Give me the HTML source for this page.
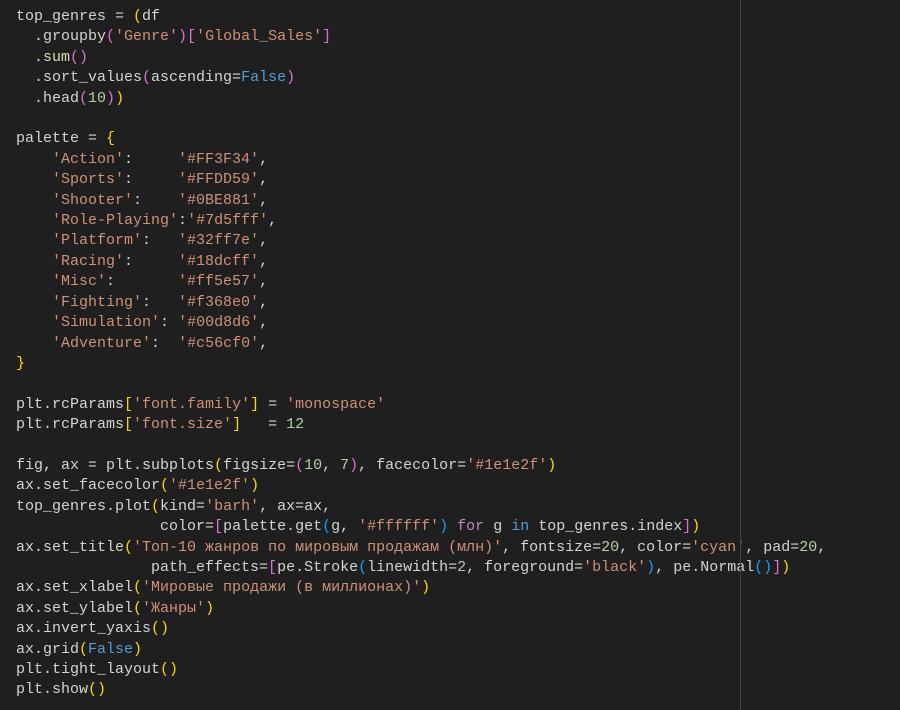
<!DOCTYPE html>
<html><head><meta charset="utf-8"><style>
html,body{margin:0;padding:0;background:#1f1f1f;width:900px;height:710px;overflow:hidden}
pre{margin:0;padding:7px 0 0 16px;font-family:"Liberation Mono","DejaVu Sans Mono",monospace;font-size:15px;line-height:20.4px;color:#d4d4d4;}
.vl{position:absolute;left:740px;top:0;width:1px;height:710px;background:#404040}
.s{color:#ce9178}.n{color:#b5cea8}.k{color:#569cd6}.g{color:#ffd700}.p{color:#da70d6}.b{color:#179fff}.f{color:#dcdcaa}.c{color:#c586c0}
</style></head><body><div class="vl"></div><pre>top_genres = <span class="g">(</span>df
  .groupby<span class="p">(</span><span class="s">'Genre'</span><span class="p">)[</span><span class="s">'Global_Sales'</span><span class="p">]</span>
  .<span class="f">sum</span><span class="p">()</span>
  .sort_values<span class="p">(</span>ascending=<span class="k">False</span><span class="p">)</span>
  .head<span class="p">(</span><span class="n">10</span><span class="p">)</span><span class="g">)</span>

palette = <span class="g">{</span>
    <span class="s">'Action'</span>:     <span class="s">'#FF3F34'</span>,
    <span class="s">'Sports'</span>:     <span class="s">'#FFDD59'</span>,
    <span class="s">'Shooter'</span>:    <span class="s">'#0BE881'</span>,
    <span class="s">'Role-Playing'</span>:<span class="s">'#7d5fff'</span>,
    <span class="s">'Platform'</span>:   <span class="s">'#32ff7e'</span>,
    <span class="s">'Racing'</span>:     <span class="s">'#18dcff'</span>,
    <span class="s">'Misc'</span>:       <span class="s">'#ff5e57'</span>,
    <span class="s">'Fighting'</span>:   <span class="s">'#f368e0'</span>,
    <span class="s">'Simulation'</span>: <span class="s">'#00d8d6'</span>,
    <span class="s">'Adventure'</span>:  <span class="s">'#c56cf0'</span>,
<span class="g">}</span>

plt.rcParams<span class="g">[</span><span class="s">'font.family'</span><span class="g">]</span> = <span class="s">'monospace'</span>
plt.rcParams<span class="g">[</span><span class="s">'font.size'</span><span class="g">]</span>   = <span class="n">12</span>

fig, ax = plt.subplots<span class="g">(</span>figsize=<span class="p">(</span><span class="n">10</span>, <span class="n">7</span><span class="p">)</span>, facecolor=<span class="s">'#1e1e2f'</span><span class="g">)</span>
ax.set_facecolor<span class="g">(</span><span class="s">'#1e1e2f'</span><span class="g">)</span>
top_genres.plot<span class="g">(</span>kind=<span class="s">'barh'</span>, ax=ax,
                color=<span class="p">[</span>palette.get<span class="b">(</span>g, <span class="s">'#ffffff'</span><span class="b">)</span> <span class="c">for</span> g <span class="k">in</span> top_genres.index<span class="p">]</span><span class="g">)</span>
ax.set_title<span class="g">(</span><span class="s">'Топ-10 жанров по мировым продажам (млн)'</span>, fontsize=<span class="n">20</span>, color=<span class="s">'cyan'</span>, pad=<span class="n">20</span>,
               path_effects=<span class="p">[</span>pe.Stroke<span class="b">(</span>linewidth=<span class="n">2</span>, foreground=<span class="s">'black'</span><span class="b">)</span>, pe.Normal<span class="b">()</span><span class="p">]</span><span class="g">)</span>
ax.set_xlabel<span class="g">(</span><span class="s">'Мировые продажи (в миллионах)'</span><span class="g">)</span>
ax.set_ylabel<span class="g">(</span><span class="s">'Жанры'</span><span class="g">)</span>
ax.invert_yaxis<span class="g">()</span>
ax.grid<span class="g">(</span><span class="k">False</span><span class="g">)</span>
plt.tight_layout<span class="g">()</span>
plt.show<span class="g">()</span></pre></body></html>
